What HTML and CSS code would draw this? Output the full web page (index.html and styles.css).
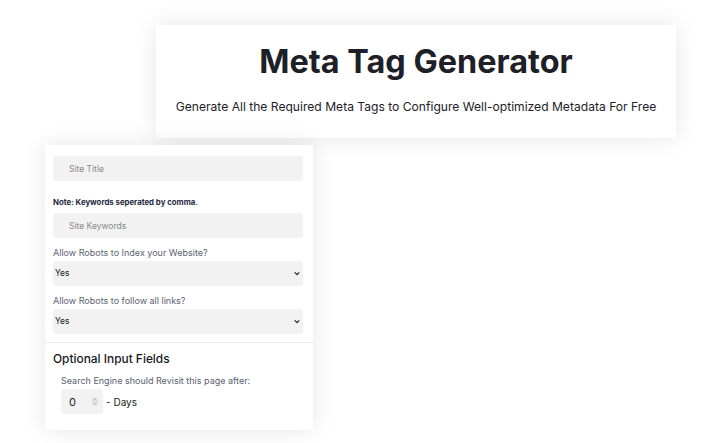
FILE: index.html
```html
<!DOCTYPE html>
<html>
<head>
<meta charset="utf-8">
<link rel="stylesheet" href="styles.css">
</head>
<body>
<header class="hero">
  <h1 class="hero-title">Meta Tag Generator</h1>
  <p class="hero-sub">Generate All the Required Meta Tags to Configure Well-optimized Metadata For Free</p>
</header>
<section class="form-card">
  <div class="field">
    <input class="text-input" type="text" placeholder="Site Title">
  </div>
  <p class="note">Note: Keywords seperated by comma.</p>
  <div class="field">
    <input class="text-input" type="text" placeholder="Site Keywords">
  </div>
  <label class="label">Allow Robots to Index your Website?</label>
  <div class="select-wrap">
    <select class="select"><option>Yes</option><option>No</option></select>
    <svg class="chev" viewBox="0 0 8 6" width="6" height="5"><path d="M1 1.5 L4 4.5 L7 1.5" fill="none" stroke="#222" stroke-width="1.6"/></svg>
  </div>
  <label class="label">Allow Robots to follow all links?</label>
  <div class="select-wrap">
    <select class="select"><option>Yes</option><option>No</option></select>
    <svg class="chev" viewBox="0 0 8 6" width="6" height="5"><path d="M1 1.5 L4 4.5 L7 1.5" fill="none" stroke="#222" stroke-width="1.6"/></svg>
  </div>
  <hr class="divider">
  <h2 class="opt-title">Optional Input Fields</h2>
  <div class="opt-body">
    <p class="opt-label">Search Engine should Revisit this page after:</p>
    <div class="days-row">
      <div class="num-wrap">
        <input class="num" type="number" value="0">
        <svg class="spin" viewBox="0 0 8 12" width="6" height="9"><rect x="0" y="0" width="8" height="12" rx="1.5" fill="#e6e6e6"/><path d="M2 4.5 L4 2.5 L6 4.5 M2 7.5 L4 9.5 L6 7.5" fill="none" stroke="#999" stroke-width="0.9"/></svg>
      </div>
      <span class="days">- Days</span>
    </div>
  </div>
</section>
</body>
</html>
```
FILE: styles.css
```css
* { box-sizing: border-box; }
html, body { margin: 0; padding: 0; background: #fff; }
body {
  font-family: Inter, "Noto Sans", "Liberation Sans", sans-serif;
  color: #1a1d21;
  padding-top: 25px;
  height: 443px;
  overflow: hidden;
}
.hero {
  margin-left: 156px;
  width: 520px;
  height: 113px;
  background: #fff;
  box-shadow: 0 0 22px rgba(0,0,0,0.10);
  text-align: center;
  padding-top: 16px;
}
.hero-title {
  margin: 0;
  font-size: 32.4px;
  font-weight: 700;
  line-height: 42px;
  color: #1d2127;
}
.hero-sub {
  margin: 16px 0 0;
  font-size: 12.1px;
  line-height: 16px;
  color: #1d2127;
}
.form-card {
  margin-left: 45px;
  margin-top: 7px;
  width: 268px;
  height: 285px;
  background: #fff;
  box-shadow: 0 0 22px rgba(0,0,0,0.10);
  padding: 11px 10px 0 8px;
  display: flex;
  flex-direction: column;
}
.text-input {
  display: block;
  width: 250px;
  height: 25px;
  border: none;
  border-radius: 3px;
  background: #f2f2f2;
  padding: 0 16px;
  font-family: inherit;
  font-size: 8.5px;
  color: #333;
  outline: none;
}
.text-input::placeholder { color: #8a8a8a; }
.note {
  margin: 16px 0 5px;
  font-size: 7.8px;
  line-height: 11px;
  font-weight: 700;
  color: #1e2a3d;
}
.label {
  display: block;
  margin: 9px 0 1px;
  font-size: 9px;
  line-height: 12px;
  color: #5a6270;
}
.select-wrap {
  position: relative;
  width: 250px;
  height: 25px;
  margin-bottom: 1px;
}
.select {
  -webkit-appearance: none;
  appearance: none;
  width: 250px;
  height: 25px;
  border: none;
  border-radius: 3px;
  background: #f2f2f2;
  padding: 0 2px;
  font-family: inherit;
  font-size: 8.5px;
  color: #1a1d21;
  outline: none;
}
.chev {
  position: absolute;
  right: 3px;
  top: 11px;
}
.divider {
  margin: 8px -10px 0 -8px;
  border: none;
  border-top: 1px solid #ececec;
  height: 0;
}
.opt-title {
  margin: 8px 0 0;
  font-size: 11.9px;
  line-height: 16px;
  font-weight: 500;
  color: #15181c;
}
.opt-body { padding-left: 8px; }
.opt-label {
  margin: 8px 0 2px;
  font-size: 9px;
  line-height: 12px;
  color: #5a6270;
}
.days-row {
  display: flex;
  align-items: center;
  gap: 3px;
}
.num-wrap {
  position: relative;
  width: 42px;
  height: 25px;
}
.num {
  width: 42px;
  height: 25px;
  border: none;
  border-radius: 3px;
  background: #f2f2f2;
  padding: 0 0 0 8px;
  font-family: inherit;
  font-size: 11px;
  color: #1a1d21;
  outline: none;
  -moz-appearance: textfield;
}
.num::-webkit-inner-spin-button,
.num::-webkit-outer-spin-button { -webkit-appearance: none; margin: 0; }
.spin {
  position: absolute;
  left: 31px;
  top: 8px;
}
.days {
  font-size: 10px;
  color: #1a1d21;
}
```
